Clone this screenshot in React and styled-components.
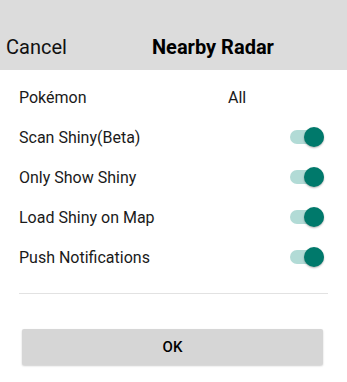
import React, { useState } from "react";
import styled, { createGlobalStyle } from "styled-components";

const GlobalStyle = createGlobalStyle`
  html, body {
    margin: 0;
    padding: 0;
    background: #ffffff;
    font-family: Roboto, "Liberation Sans", sans-serif;
  }
`;

const Page = styled.div`
  width: 347px;
  height: 382px;
  display: flex;
  flex-direction: column;
  background: #ffffff;
  overflow: hidden;
`;

const Header = styled.div`
  height: 70px;
  background: #dcdcdc;
  display: flex;
  align-items: flex-end;
  padding: 0 0 11px 6px;
  box-sizing: border-box;
`;

const CancelButton = styled.span`
  font-size: 20px;
  color: #111;
  width: 146px;
`;

const Title = styled.span`
  font-size: 20px;
  font-weight: 700;
  color: #000;
`;

const Body = styled.div`
  padding: 7px 19px 0 19px;
  display: flex;
  flex-direction: column;
`;

const Row = styled.div`
  height: 40px;
  display: flex;
  align-items: center;
  justify-content: space-between;
  font-size: 16px;
  color: #1a1a1a;
`;

const Value = styled.span`
  width: 100px;
`;

const Track = styled.button`
  position: relative;
  width: 34px;
  height: 14px;
  margin-right: 4px;
  border: none;
  border-radius: 7px;
  padding: 0;
  background: ${(p) => (p.$on ? "#b2dbd6" : "#bdbdbd")};
  cursor: pointer;
`;

const Thumb = styled.span`
  position: absolute;
  top: -3px;
  left: ${(p) => (p.$on ? "14px" : "0")};
  width: 20px;
  height: 20px;
  border-radius: 50%;
  background: ${(p) => (p.$on ? "#00796b" : "#f5f5f5")};
  box-shadow: 0 1px 2px rgba(0, 0, 0, 0.3);
`;

const Divider = styled.div`
  height: 1px;
  background: #e2e2e2;
  margin-top: 16px;
`;

const Footer = styled.div`
  padding: 35px 24px 0 22px;
`;

const OkButton = styled.button`
  width: 100%;
  height: 36px;
  border: none;
  border-radius: 2px;
  background: #d6d6d6;
  box-shadow: 0 1px 2px rgba(0, 0, 0, 0.2);
  font-family: Roboto, "Liberation Sans", sans-serif;
  font-size: 15px;
  font-weight: 500;
  color: #000;
`;

function Toggle({ on, onChange }) {
  return (
    <Track $on={on} onClick={onChange}>
      <Thumb $on={on} />
    </Track>
  );
}

const settings = [
  "Scan Shiny(Beta)",
  "Only Show Shiny",
  "Load Shiny on Map",
  "Push Notifications",
];

export default function App() {
  const [flags, setFlags] = useState(settings.map(() => true));

  return (
    <Page>
      <GlobalStyle />
      <Header>
        <CancelButton>Cancel</CancelButton>
        <Title>Nearby Radar</Title>
      </Header>
      <Body>
        <Row>
          <span>Pokémon</span>
          <Value>All</Value>
        </Row>
        {settings.map((label, i) => (
          <Row key={label}>
            <span>{label}</span>
            <Toggle
              on={flags[i]}
              onChange={() => setFlags(flags.map((f, j) => (j === i ? !f : f)))}
            />
          </Row>
        ))}
        <Divider />
      </Body>
      <Footer>
        <OkButton>OK</OkButton>
      </Footer>
    </Page>
  );
}
